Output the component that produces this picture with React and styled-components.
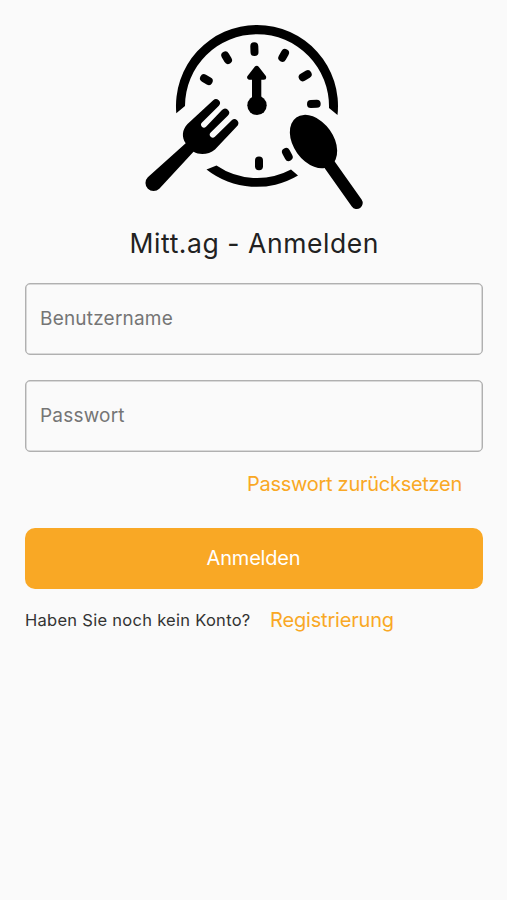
import styled, { createGlobalStyle } from "styled-components";

export default function App() {
  return (
    <>
      <GlobalStyle />
      <StyledMain>
        <Logo />
        <StyledTitle>Mitt.ag - Anmelden</StyledTitle>
        <StyledForm onSubmit={(event) => event.preventDefault()}>
          <StyledInput type="text" placeholder="Benutzername" />
          <StyledInput type="password" placeholder="Passwort" />
          <StyledResetRow>
            <StyledLink href="#reset" $spacing="-0.27px">
              Passwort zurücksetzen
            </StyledLink>
          </StyledResetRow>
          <StyledButton type="submit">Anmelden</StyledButton>
        </StyledForm>
        <StyledRegister>
          <StyledQuestion>Haben Sie noch kein Konto?</StyledQuestion>
          <StyledLink href="#register" $spacing="-0.18px">
            Registrierung
          </StyledLink>
        </StyledRegister>
      </StyledMain>
    </>
  );
}

function Logo() {
  return (
    <StyledLogo viewBox="140 20 230 195" aria-hidden="true">
      {/* clock face */}
      <path d="M176.3 113.2A81 81 0 0 1 257 25A81 81 0 0 1 337.5 115L329 108A72 72 0 0 0 257 34.2A72 72 0 0 0 185 106Z" />
      <path d="M206.5 169.5A81 81 0 0 0 298 175.5L291 169.5A72 72 0 0 1 216.5 165.5Z" />
      <g stroke="#000" strokeWidth="8" strokeLinecap="round">
        <path d="M254.3 46.3L254.5 52" />
        <path d="M285 53L282.3 57.7" />
        <path d="M307.7 74.3L302.7 77.3" />
        <path d="M311 104L316.7 103.8" />
        <path d="M286 152L288.7 157" />
        <path d="M259 160.5V166.3" />
        <path d="M204 78.3L208.7 81" />
        <path d="M225.3 55.5L228 60" />
      </g>
      {/* hand */}
      <circle cx="257" cy="105.3" r="9.7" />
      <path d="M252 77H261.3V100H252Z" />
      <path
        d="M256.7 68.3L249.7 77.3H263.7Z"
        stroke="#000"
        strokeWidth="5"
        strokeLinejoin="round"
      />
      {/* fork */}
      <path d="M213.2 100.2A4 4 0 0 1 218.9 105.8L202 122.6A2.9 2.9 0 0 0 206 126.8L222 110A4 4 0 0 1 228 115.6L210.7 132.6A2.9 2.9 0 0 0 214.9 136.8L232 120A4 4 0 0 1 237.7 125.4L215 149.5C209 154.5 200 155.5 193.5 151.8L159.3 188.7A8 8 0 0 1 147.8 177.3L185.7 143.3C181.5 137 182 130 187.5 124Z" />
      {/* spoon */}
      <ellipse
        cx="313.5"
        cy="141.6"
        rx="20"
        ry="29.6"
        transform="rotate(-35.5 313.5 141.6)"
      />
      <path
        d="M322 154L356.7 203"
        stroke="#000"
        strokeWidth="12"
        strokeLinecap="round"
      />
    </StyledLogo>
  );
}

const GlobalStyle = createGlobalStyle`
  * {
    box-sizing: border-box;
  }
  body {
    margin: 0;
    background: #fafafa;
    font-family: Inter, "Liberation Sans", sans-serif;
  }
`;
const StyledMain = styled.main`
  display: flex;
  flex-direction: column;
  min-height: 100vh;
  padding: 20px 24.5px;
`;
const StyledLogo = styled.svg`
  display: block;
  width: 230px;
  height: 195px;
  margin-left: 115.5px;
`;
const StyledTitle = styled.h1`
  margin: 12px 0 23px;
  padding-left: 1.5px;
  font-size: 26.5px;
  font-weight: 400;
  line-height: 33px;
  letter-spacing: 0.56px;
  text-align: center;
  white-space: nowrap;
  color: #212121;
`;
const StyledForm = styled.form`
  display: flex;
  flex-direction: column;
`;
const StyledInput = styled.input`
  width: 100%;
  height: 72px;
  margin-bottom: 25px;
  padding: 0 14.5px 1px;
  border: 1px solid #b0b0b0;
  border-radius: 5px;
  box-shadow: inset 0 0 0 0.5px #b8b8b8;
  background: transparent;
  font-family: inherit;
  font-size: 19px;
  letter-spacing: 0.2px;
  outline: none;
  &::placeholder {
    color: #757575;
    opacity: 1;
  }
`;
const StyledResetRow = styled.div`
  display: flex;
  justify-content: flex-end;
  margin: -5px 0 31.5px;
  padding-right: 20.5px;
`;
const StyledLink = styled.a`
  font-size: 20px;
  line-height: 24px;
  letter-spacing: ${({ $spacing }) => $spacing};
  text-decoration: none;
  white-space: nowrap;
  color: #f9a825;
`;
const StyledButton = styled.button`
  height: 61px;
  border: none;
  border-radius: 10px;
  background: #f9a825;
  font-family: inherit;
  font-size: 20px;
  letter-spacing: -0.2px;
  color: #fff;
`;
const StyledRegister = styled.div`
  display: flex;
  align-items: center;
  gap: 19.5px;
  margin-top: 19.5px;
  padding-left: 0.5px;
`;
const StyledQuestion = styled.span`
  font-size: 16.5px;
  letter-spacing: 0.28px;
  white-space: nowrap;
  color: #333;
`;
